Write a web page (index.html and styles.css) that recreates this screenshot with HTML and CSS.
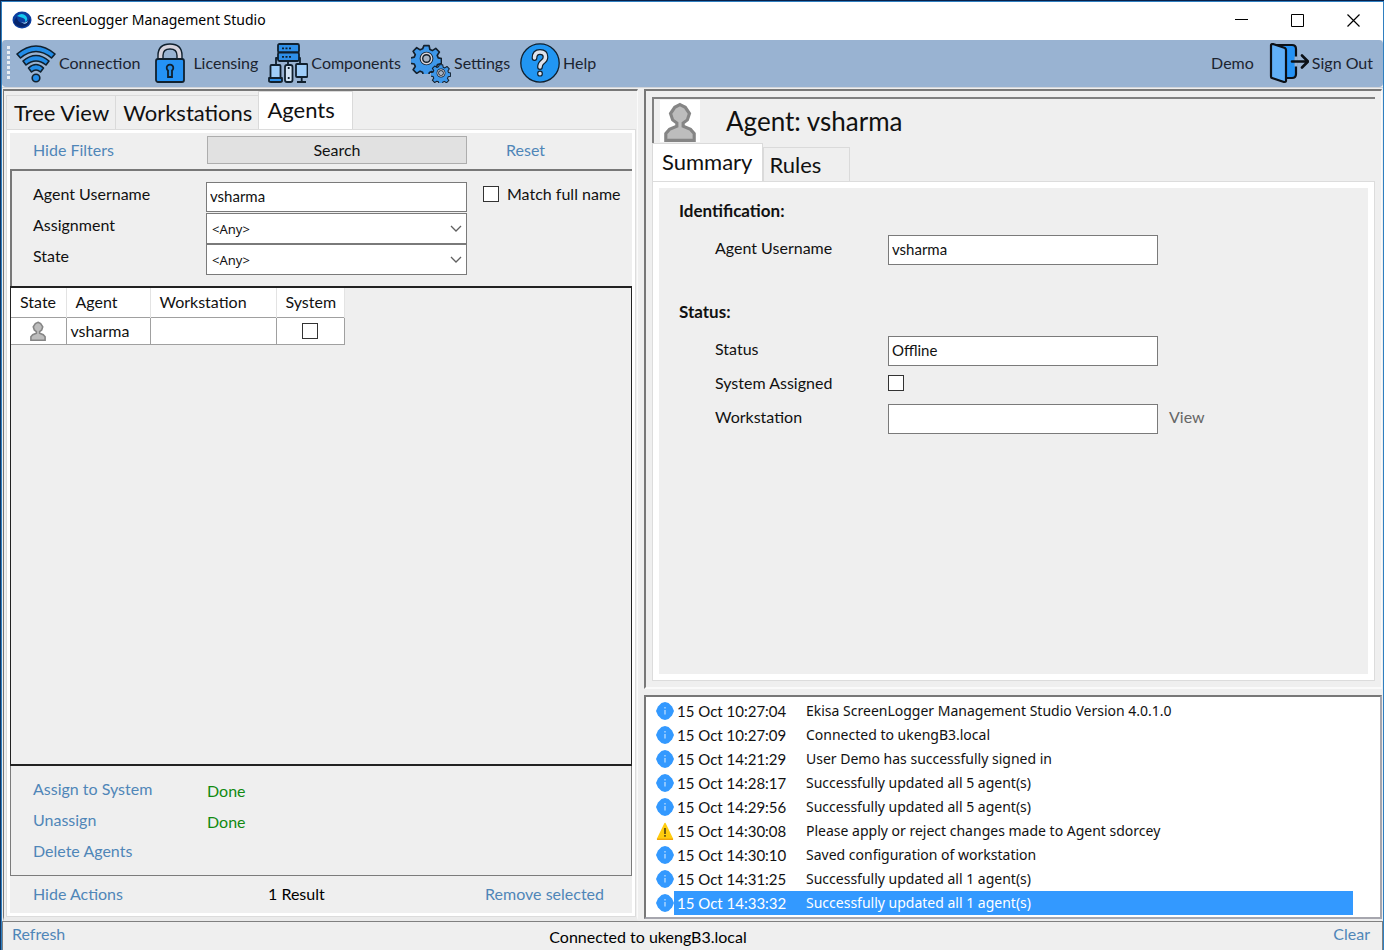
FILE: index.html
```html
<!DOCTYPE html>
<html lang="en">
<head>
<meta charset="utf-8">
<title>ScreenLogger Management Studio</title>
<link rel="stylesheet" href="styles.css">
</head>
<body>
<svg class="defs" aria-hidden="true">
  <symbol id="info" viewBox="0 0 18 18"><path d="M5.500 1 9 0l3.500 1 3.500 3.500L18 9l-2 4.500-3.500 3.500L9 18l-3.500-1L2 13.500 0 9l2-4.500z" fill="#3399ff"/><path d="M9 5v1.500M9 8v4.500" stroke="#b9dcff" stroke-width="1.300"/></symbol>
  <symbol id="warn" viewBox="0 0 18 18"><path d="M9 1.500 16.500 17H1.500z" fill="#ffcc0d" stroke="#ffcc0d" stroke-width="1.500" stroke-linejoin="round"/><path d="M1 17.300h16" stroke="#f0a30a" stroke-width="1.400"/><path d="M9 6v6M9 13v1.700" stroke="#5f4a10" stroke-width="1.700"/></symbol>
  <symbol id="person" viewBox="0 0 32 38"><path d="M16 2.500l5 2.500 4 6-2 6-4 3v3l7 3 3.500 4v6.500h-27V30L6 26l7-3v-3l-4-3-2-6 4-6z" fill="#bdbdbd" stroke="#858585" stroke-width="3"/></symbol>
  <symbol id="gear" viewBox="-14 -14 28 28"><path d="M-2.500-12.500h5l.8 3.800 2.400 1 3.300-2.100 3.500 3.500-2.100 3.300 1 2.400 3.100.6v5l-3.800.8-1 2.400 2.100 3-3.500 3.500-3.200-2.100-2.300 1-.8 3.400h-5l-.8-3.700-2.400-1-3.300 2.100-3.500-3.500 2.100-3.200-1-2.400-3.900-.8v-5l3.900-.8 1-2.400-2.100-3.300 3.500-3.500 3.300 2.100 2.400-1z" transform="scale(.93)" fill="#3d97ea" stroke="#14202c" stroke-width="1.600" stroke-linejoin="round"/><circle r="4.500" fill="#a7b4c5" stroke="#14202c" stroke-width="3.400"/><circle r="4.700" fill="none" stroke="#d8d5dc" stroke-width="1.300"/></symbol>
</svg>
<div class="window">
  <header class="titlebar">
    <svg class="app-icon" viewBox="0 0 20 18"><ellipse cx="10" cy="9" rx="9.500" ry="8.500" fill="#0c3fa0"/><path d="M2 12q5 6 12 3 5-3 4-8-2 6-8 5-5-1-5-6-3 2-3 6" fill="#07256b"/><path d="M5 5q5-4 9 0 3 4-1 6 1-3-2-4-3-1-6-2" fill="#15c8ee"/><path d="M9 11q4 2 7-1-2 5-7 1" fill="#b8e9ff"/></svg>
    <h1 class="title">ScreenLogger Management Studio</h1>
    <button class="caption" aria-label="Minimize"><svg viewBox="0 0 13 13"><path d="M0 5.500h13" stroke="#000"/></svg></button>
    <button class="caption" aria-label="Maximize"><svg viewBox="0 0 13 13"><path d="M.5.5h12v12H.5z" fill="none" stroke="#000"/></svg></button>
    <button class="caption" aria-label="Close"><svg viewBox="0 0 13 13"><path d="M.5.5l12 12M12.500.5l-12 12" stroke="#000" stroke-width="1.200"/></svg></button>
  </header>

  <nav class="toolbar">
    <span class="grip"></span>
    <button class="tool"><svg class="tool-icon" viewBox="0 0 40 40"><g fill="#238de8" stroke="#10202e" stroke-width="1.600" stroke-linejoin="round"><path d="M1 11Q20-5 39 11l-3.500 4Q20 2 4.500 15z"/><path d="M7 18Q20 7 33 18l-3 4Q20 14 10 22z"/><path d="M12.500 25q7.500-7 15 0l-3 4q-4.500-4-9 0z"/><circle cx="20" cy="35" r="3.800"/></g></svg><span>Connection</span></button>
    <button class="tool"><svg class="tool-icon" viewBox="0 0 40 40"><path d="M10.500 17v-4.500Q10.500 3.500 20 3.500t9.500 9V17" fill="none" stroke="#10202e" stroke-width="6.400"/><path d="M10.500 17v-4.500Q10.500 3.500 20 3.500t9.500 9V17" fill="none" stroke="#d5d2dc" stroke-width="3.600"/><rect x="6" y="16" width="28" height="23" rx="2" fill="#2492f5" stroke="#10202e" stroke-width="1.800"/><path d="M18 34v-6.500a3.300 3.300 0 1 1 4 0V34z" fill="#238de8" stroke="#10202e" stroke-width="1.800"/></svg><span>Licensing</span></button>
    <button class="tool"><svg class="tool-icon" viewBox="0 0 40 40"><g fill="#2e8fe8" stroke="#10202e" stroke-width="1.800" stroke-linejoin="round"><path d="M8 24v-9h3M32 24v-9h-3M20 19v7" fill="none"/><rect x="10" y="1" width="21" height="8.500" rx="1.500"/><rect x="10" y="9.500" width="21" height="8.500" rx="1.500"/><path d="M14 5.300h9M14 13.800h9" stroke-dasharray="2 1.500"/><rect x="2.500" y="22" width="10" height="14" rx="1" fill="#9fcdf8"/><path d="M1 35h13v3q0 1-2 1H3q-2 0-2-1z"/><rect x="17" y="22" width="7.500" height="17" rx="2" fill="#d4e5f5"/><path d="M20.700 24v2M20.700 34v2"/><rect x="28" y="21" width="11.500" height="13" rx="1" fill="#9fcdf8"/><path d="M33.700 34v5M29 39h9"/></g></svg><span>Components</span></button>
    <button class="tool"><svg class="tool-icon" viewBox="0 0 40 40"><use href="#gear" x="0" y="0" width="31" height="31"/><use href="#gear" x="20" y="20" width="20" height="20"/></svg><span>Settings</span></button>
    <button class="tool"><svg class="tool-icon" viewBox="0 0 40 40"><circle cx="20" cy="20" r="19.200" fill="#2196f3" stroke="#10202e" stroke-width="1.300"/><g fill="none" stroke-linecap="round"><path d="M14.500 15q0-6 5.500-6t5.500 5q0 3-3 5-2.500 2-2.500 5M20 30.500v.2" stroke="#10202e" stroke-width="5.800"/><path d="M14.500 15q0-6 5.500-6t5.500 5q0 3-3 5-2.500 2-2.500 5M20 30.500v.2" stroke="#dfe3ec" stroke-width="3.400"/></g></svg><span>Help</span></button>
    <span class="user">Demo</span>
    <button class="tool"><svg class="tool-icon" viewBox="0 0 40 40"><g stroke="#0b1016" stroke-width="2.200" stroke-linejoin="round" stroke-linecap="round"><path d="M4 2h19q4 0 4 4v25q0 4-4 4h-6z" fill="#2492f5"/><path d="M2 2q0-1 2-1l12 4q1 1 1 2v31q0 1-2 1L3 35q-1 0-1-2z" fill="#61aff6"/><path d="M27 13.500v10" stroke="#99b3d2" stroke-width="3" stroke-linecap="butt"/><path d="M23 18.500h16M33 12.500l6 6-6 6" fill="none" stroke-width="2.600"/></g></svg><span>Sign Out</span></button>
  </nav>

  <main class="main">
    <section class="panel left">
      <div class="tabs" role="tablist">
        <button class="tab" role="tab">Tree View</button>
        <button class="tab" role="tab">Workstations</button>
        <button class="tab tab-on" role="tab" aria-selected="true">Agents</button>
      </div>
      <div class="page agents-page">
        <div class="search-row">
          <a class="link" href="#">Hide Filters</a>
          <button class="search">Search</button>
          <a class="link reset" href="#">Reset</a>
        </div>
        <form class="filters">
          <label class="name" for="f-user">Agent Username</label>
          <input class="field" id="f-user" type="text" value="vsharma">
          <label class="match"><input class="check" type="checkbox">Match full name</label>
          <label class="name" for="f-assign">Assignment</label>
          <div class="combo"><select id="f-assign"><option>&lt;Any&gt;</option></select><svg class="chevron" viewBox="0 0 12 8"><path d="M1 1l5 5 5-5" fill="none" stroke="#606060" stroke-width="1.300"/></svg></div>
          <label class="name row-start" for="f-state">State</label>
          <div class="combo"><select id="f-state"><option>&lt;Any&gt;</option></select><svg class="chevron" viewBox="0 0 12 8"><path d="M1 1l5 5 5-5" fill="none" stroke="#606060" stroke-width="1.300"/></svg></div>
        </form>
        <div class="results">
          <table class="grid">
            <thead><tr><th class="c-state">State</th><th class="c-agent">Agent</th><th class="c-work">Workstation</th><th class="c-system">System</th></tr></thead>
            <tbody><tr><td class="mid"><svg class="row-person"><use href="#person"/></svg></td><td>vsharma</td><td></td><td class="mid"><input class="check" type="checkbox" aria-label="System"></td></tr></tbody>
          </table>
        </div>
        <div class="actions">
          <a class="link" href="#">Assign to System</a><span class="done">Done</span>
          <a class="link" href="#">Unassign</a><span class="done">Done</span>
          <a class="link" href="#">Delete Agents</a>
        </div>
        <div class="page-foot">
          <a class="link" href="#">Hide Actions</a>
          <span>1 Result</span>
          <a class="link" href="#">Remove selected</a>
        </div>
      </div>
    </section>

    <div class="right">
      <section class="panel detail">
        <header class="agent-head">
          <span class="avatar"><svg><use href="#person"/></svg></span>
          <h2>Agent: vsharma</h2>
        </header>
        <div class="tabs detail-tabs" role="tablist">
          <button class="tab tab-on" role="tab" aria-selected="true">Summary</button>
          <button class="tab tab-rules" role="tab">Rules</button>
        </div>
        <div class="page summary-page">
          <h3>Identification:</h3>
          <div class="props">
            <label class="name" for="d-user">Agent Username</label><input class="field" id="d-user" type="text" value="vsharma">
          </div>
          <h3 class="status-title">Status:</h3>
          <div class="props">
            <label class="name" for="d-status">Status</label><input class="field" id="d-status" type="text" value="Offline">
            <label class="name row-start" for="d-sys">System Assigned</label><input class="check" id="d-sys" type="checkbox">
            <label class="name row-start" for="d-work">Workstation</label><input class="field" id="d-work" type="text"><button class="view">View</button>
          </div>
        </div>
      </section>
      <ol class="log">
        <li><svg><use href="#info"/></svg><div class="entry"><time>15 Oct 10:27:04</time><span>Ekisa ScreenLogger Management Studio Version 4.0.1.0</span></div></li>
        <li><svg><use href="#info"/></svg><div class="entry"><time>15 Oct 10:27:09</time><span>Connected to ukengB3.local</span></div></li>
        <li><svg><use href="#info"/></svg><div class="entry"><time>15 Oct 14:21:29</time><span>User Demo has successfully signed in</span></div></li>
        <li><svg><use href="#info"/></svg><div class="entry"><time>15 Oct 14:28:17</time><span>Successfully updated all 5 agent(s)</span></div></li>
        <li><svg><use href="#info"/></svg><div class="entry"><time>15 Oct 14:29:56</time><span>Successfully updated all 5 agent(s)</span></div></li>
        <li><svg><use href="#warn"/></svg><div class="entry"><time>15 Oct 14:30:08</time><span>Please apply or reject changes made to Agent sdorcey</span></div></li>
        <li><svg><use href="#info"/></svg><div class="entry"><time>15 Oct 14:30:10</time><span>Saved configuration of workstation</span></div></li>
        <li><svg><use href="#info"/></svg><div class="entry"><time>15 Oct 14:31:25</time><span>Successfully updated all 1 agent(s)</span></div></li>
        <li><svg><use href="#info"/></svg><div class="entry entry-on"><time>15 Oct 14:33:32</time><span>Successfully updated all 1 agent(s)</span></div></li>
      </ol>
    </div>
  </main>

  <footer class="statusbar">
    <a class="link" href="#">Refresh</a>
    <span class="conn">Connected to ukengB3.local</span>
    <a class="link clear" href="#">Clear</a>
  </footer>
</div>
</body>
</html>
```
FILE: styles.css
```css
* { box-sizing: border-box; }

body {
  margin: 0;
  background: #0b2348;
  color: #111;
  font: 16px/20px Lato, "Noto Sans", sans-serif;
}

button, input, select { font: inherit; color: inherit; margin: 0; border-radius: 0; }
button { background: none; border: 0; padding: 0; white-space: nowrap; }
h1, h2, h3 { margin: 0; font-weight: 400; }
.defs { position: absolute; width: 0; height: 0; }
.link { color: #4f86b8; text-decoration: none; }

.window {
  display: flex;
  flex-direction: column;
  min-height: 100vh;
  border-top: 1px solid #08204a;
  border-left: 1px solid #12335f;
  background: #efefef;
  box-shadow: inset 1px 1px #2f7fc0, inset -1px 0 #2f7fc0;
  padding: 1px 1px 0;
}

/* Title bar */
.titlebar { display: flex; align-items: center; height: 38px; padding: 0 2px 2px 10px; background: #fff; }
.app-icon { width: 20px; height: 18px; }
.title { flex: 1; margin-left: 5px; font: 14px/20px "Noto Sans", sans-serif; color: #000; }
.caption { width: 56px; height: 36px; }
.caption svg { width: 13px; height: 13px; display: block; margin: 0 auto; }

/* Toolbar */
.toolbar { display: flex; align-items: center; height: 47px; padding: 0 10px 2px 5px; background: #99b3d2; border-radius: 4px; color: #1c2430; }
.grip { width: 3px; height: 34px; margin-right: 6px; background: repeating-linear-gradient(#e9eef5 0 3px, transparent 3px 5px); }
.tool { display: flex; align-items: center; gap: 3px; margin-right: 10px; }
.tool-icon { width: 40px; height: 40px; flex: none; }
.user { margin-left: auto; margin-right: 15px; }
.tool:last-child { margin-right: 0; }

/* Two-column work area */
.main { flex: 1; display: grid; grid-template-columns: 635fr 738fr; gap: 6px; padding: 1px 1px 0; min-height: 0; border-top: 1px solid #d2d5da; }
.panel { display: flex; flex-direction: column; border: 2px solid #787878; border-right-color: #fafafa; border-bottom-color: #fafafa; border-right-width: 1px; }
.left { padding: 0 1px 0 2px; border-left-width: 1px; border-bottom-width: 4px; border-bottom-color: #ebebeb; }
.tabs { display: flex; align-items: flex-end; height: 38px; }
.tab { height: 34px; padding: 0 6px 0 7px; border: 1px solid #dadada; border-bottom: 0; border-right-width: 0; font-size: 22px; line-height: 32px; }
.tab-on { height: 38px; padding: 0 17px 2px 8px; background: #fff; border-right-width: 1px; }
.page { flex: 1; display: flex; flex-direction: column; border: 1px solid #dcdcdc; box-shadow: inset 0 0 0 3px #fff; padding: 3px; }

.search-row { display: grid; grid-template-columns: 174px 260px 1fr; align-items: center; height: 36px; padding: 0 0 2px 23px; }
.search { height: 28px; border: 1px solid #adadad; background: #e1e1e1; }
.reset { padding-left: 39px; }

.filters {
  display: grid;
  grid-template-columns: 173px 261px auto;
  grid-template-rows: 31px 31px 31px;
  align-items: start;
  justify-content: start;
  padding: 11px 0 11px 21px;
  border: solid #787878;
  border-width: 2px 0 0 2px;
}
.name { line-height: 24px; }
.field { height: 30px; width: 100%; padding: 0 3px 2px; border: 1px solid #7a7a7a; background: #fff; font-size: 15px; }
.check { appearance: none; width: 16px; height: 16px; margin: 0; border: 1px solid #333; background: #fff; }
.match { display: flex; align-items: center; gap: 8px; line-height: 24px; padding-left: 16px; white-space: nowrap; }
.row-start { grid-column: 1; }
.combo { position: relative; height: 31px; }
.combo select { appearance: none; width: 100%; height: 31px; padding: 0 5px; border: 1px solid #7a7a7a; background: #fff; font: 13px/20px "Noto Sans", sans-serif; }
.chevron { position: absolute; right: 5px; top: 12px; width: 12px; height: 8px; pointer-events: none; }

.results { flex: 1; border: 2px solid #222; border-left-width: 1px; border-right-width: 1px; }
.grid { border-collapse: collapse; font-size: 16px; table-layout: fixed; background: #fff; }
.grid th { height: 29px; padding: 0 9px; text-align: left; font-weight: 400; border-right: 1px solid #e3e3e3; }
.grid td { height: 27px; padding: 0 4px; border: 1px solid #a0a0a0; }
.grid td:first-child { border-left: 0; }
.c-state { width: 55px; }
.c-agent { width: 84px; }
.c-work { width: 126px; }
.c-system { width: 68px; }
.grid .c-system { padding-right: 8px; }
.grid .mid { text-align: center; }
.grid .check, .row-person { display: block; margin: 0 auto; }
.row-person { width: 18px; height: 20px; }

.actions { display: grid; grid-template-columns: 174px auto; grid-auto-rows: 31px; justify-content: start; align-items: center; padding: 7px 0 9px 22px; border: 1px solid #7b7b7b; border-top: 0; }
.done { color: #118a11; padding-top: 4px; }
.page-foot { display: grid; grid-template-columns: 235px 1fr auto; height: 37px; align-items: center; padding: 0 28px 2px 23px; color: #000; }

/* Agent details */
.right { display: flex; flex-direction: column; gap: 6px; min-width: 0; }
.detail { flex: 1; padding: 6px; }
.agent-head { display: flex; align-items: center; height: 46px; border: solid #808080; border-width: 2px 0 0 2px; }
.avatar { width: 40px; height: 42px; margin-left: 6px; background: #fff; }
.avatar svg { display: block; width: 34px; height: 40px; margin: 2px auto 0; }
.agent-head h2 { margin-left: 26px; font-size: 26px; line-height: 32px; }
.detail-tabs .tab-on { padding: 0 10px 2px 9px; }
.tab-rules { border-right-width: 1px; padding: 0 28px 0 5px; }
.summary-page { padding: 17px 26px; box-shadow: inset 0 0 0 6px #fff; }
.summary-page h3 { font-size: 17px; font-weight: 700; line-height: 24px; }
.summary-page .status-title { margin-top: 33px; }
.props { display: grid; grid-template-columns: 173px 270px auto; grid-auto-rows: 34px; align-items: center; justify-content: start; padding: 10px 0 0 36px; }
.props .name { padding-bottom: 4px; }
.props .check { margin-bottom: 4px; }
.view { padding: 0 0 4px 11px; color: #666; }

/* Event log */
.log { list-style: none; margin: 0 0 2px; padding: 2px 27px 2px 9px; border: 2px solid #787878; border-right-color: #a6a6ae; border-bottom-color: #a6a6ae; background: #fff; font-size: 15px; }
.log li { display: flex; align-items: center; height: 24px; }
.log li svg { width: 18px; height: 18px; flex: none; margin-left: 1px; }
.entry { flex: 1; display: flex; align-items: center; height: 24px; padding-left: 3px; white-space: nowrap; }
.entry time { width: 129px; }
.entry span { font: 14px/20px "Noto Sans", sans-serif; }
.entry-on { background: #3399ff; color: #fff; }

/* Status bar */
.statusbar { display: grid; grid-template-columns: 1fr auto 1fr; height: 29px; padding: 2px 12px 0 9px; border: 1px solid #808080; border-width: 1px 1px 0; }
.conn { padding: 3px 86px 0 0; color: #000; }
.clear { text-align: right; }
```
